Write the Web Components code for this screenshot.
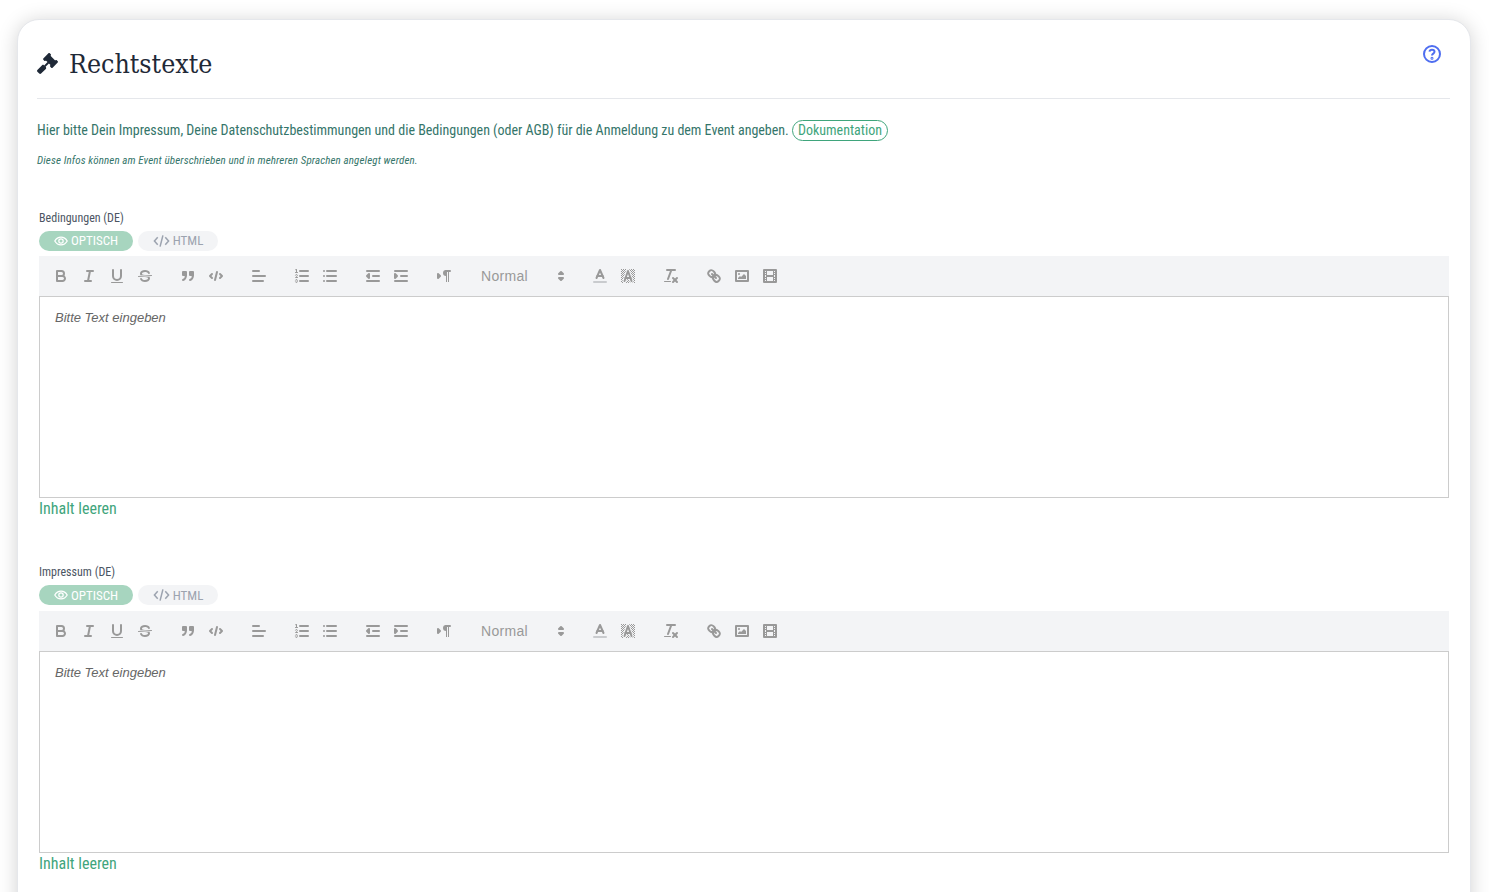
<!DOCTYPE html>
<html lang="de">
<head>
<meta charset="utf-8">
<title>Rechtstexte</title>
<style>
    html, body { margin: 0; height: 100%; overflow: hidden; background: #fff; }
    body { font-family: Roboto, "Liberation Sans", sans-serif; }
</style>
</head>
<body>
<legal-page>
    <span slot="title">Rechtstexte</span>
    <legal-editor label="Bedingungen (DE)"></legal-editor>
    <legal-editor label="Impressum (DE)"></legal-editor>
</legal-page>

<script>
// stroke helpers for the toolbar icons, all on an 18x18 grid
const ln = (a, b, c, d, w) => `<line x1="${a}" y1="${c}" x2="${b}" y2="${d}"${w ? ` stroke-width="${w}"` : ""}/>`;
const TOOLBAR_ICONS = {
    bold: `<path d="M5,4H9.5A2.5,2.5,0,0,1,12,6.5v0A2.5,2.5,0,0,1,9.5,9H5V4Z"/><path d="M5,9h5.5A2.5,2.5,0,0,1,13,11.5v0A2.5,2.5,0,0,1,10.5,14H5V9Z"/>`,
    italic: ln(7, 13, 4, 4) + ln(5, 11, 14, 14) + ln(8, 10, 14, 4),
    underline: `<path d="M5,3V9a4.012,4.012,0,0,0,4,4H9a4.012,4.012,0,0,0,4-4V3"/><rect class="f" height="1" rx=".5" ry=".5" width="12" x="3" y="15"/>`,
    strike: ln(15.5, 2.5, 8.5, 9.5, 1) + `<path class="f" d="M9.007,8C6.542,7.791,6,7.519,6,6.5,6,5.792,7.283,5,9,5c1.571,0,2.765.679,2.969,1.309a1,1,0,0,0,1.9-.617C13.356,4.106,11.354,3,9,3,6.2,3,4,4.538,4,6.5a3.2,3.2,0,0,0,.5,1.843Z"/><path class="f" d="M8.984,10C11.457,10.208,12,10.479,12,11.5c0,.708-1.283,1.5-3,1.5-1.571,0-2.765-.679-2.969-1.309a1,1,0,1,0-1.9.617C4.644,13.894,6.646,15,9,15c2.8,0,5-1.538,5-3.5a3.2,3.2,0,0,0-.5-1.843Z"/>`,
    quote: `<rect class="fs" height="3" width="3" x="4" y="5"/><rect class="fs" height="3" width="3" x="11" y="5"/><path d="M7,8c0,4.031-3,5-3,5"/><path d="M14,8c0,4.031-3,5-3,5"/>`,
    code: `<polyline points="5 7 3 9 5 11"/><polyline points="13 7 15 9 13 11"/>` + ln(10, 8, 5, 13),
    align: ln(3, 15, 9, 9) + ln(3, 13, 14, 14) + ln(3, 9, 4, 4),
    ordered: ln(7, 15, 4, 4) + ln(7, 15, 9, 9) + ln(7, 15, 14, 14) + ln(2.5, 4.5, 5.5, 5.5, 1)
        + `<path class="f" d="M3.5,6A0.5,0.5,0,0,1,3,5.5V3.085l-0.276.138A0.5,0.5,0,0,1,2.053,3c-0.124-.247-0.023-0.324.224-0.447l1-.5A0.5,0.5,0,0,1,4,2.5v3A0.5,0.5,0,0,1,3.5,6Z"/><path stroke-width="1" d="M4.5,10.5h-2c0-.234,1.85-1.076,1.85-2.234A0.959,0.959,0,0,0,2.5,8.156"/><path stroke-width="1" d="M2.5,14.846a0.959,0.959,0,0,0,1.85-.109A0.7,0.7,0,0,0,3.75,14a0.688,0.688,0,0,0,.6-0.736,0.959,0.959,0,0,0-1.85-.109"/>`,
    bullet: ln(6, 15, 4, 4) + ln(6, 15, 9, 9) + ln(6, 15, 14, 14) + ln(3, 3, 4, 4) + ln(3, 3, 9, 9) + ln(3, 3, 14, 14),
    outdent: ln(3, 15, 14, 14) + ln(3, 15, 4, 4) + ln(9, 15, 9, 9) + `<polygon class="fs" points="5 7 5 11 3 9 5 7"/>`,
    indent: ln(3, 15, 14, 14) + ln(3, 15, 4, 4) + ln(9, 15, 9, 9) + `<polygon class="fs" points="3 7 3 11 5 9 3 7"/>`,
    direction: `<polygon class="fs" points="3 11 5 9 3 7 3 11"/>` + ln(15, 11, 4, 4) + `<path class="f" d="M11,3a3,3,0,0,0,0,6h1V3H11Z"/><rect class="f" height="11" width="1" x="11" y="4"/><rect class="f" height="11" width="1" x="13" y="4"/>`,
    color: ln(3, 15, 15, 15) .replace("<line", `<line class="light"`) + `<polyline points="5.5 11 9 3 12.5 11"/>` + ln(11.63, 6.38, 9, 9),
    background: `<defs><pattern id="dots" width="2" height="2" patternUnits="userSpaceOnUse"><rect class="f" width="1" height="1"/><rect class="f" x="1" y="1" width="1" height="1"/></pattern></defs><rect x="2" y="2" width="14" height="14" fill="url(#dots)" stroke="none"/><polyline points="5.5 14 9 4 12.5 14" stroke="#f3f4f6" stroke-width="4"/><polyline points="5.5 14 9 4 12.5 14"/>` + ln(11.63, 6.38, 11, 11),
    clean: ln(5, 13, 3, 3) + ln(6, 9.35, 12, 3) + ln(11, 15, 11, 15) + ln(15, 11, 11, 15) + `<rect class="f" height="1" rx=".5" ry=".5" width="7" x="2" y="14"/>`,
    link: ln(7, 11, 7, 11) + `<path d="M8.9,4.577a3.476,3.476,0,0,1,.36,4.679A3.476,3.476,0,0,1,4.577,8.9C3.185,7.5,2.035,6.4,4.217,4.217S7.5,3.185,8.9,4.577Z"/><path d="M13.423,9.1a3.476,3.476,0,0,0-4.679-.36,3.476,3.476,0,0,0,.36,4.679c1.392,1.392,2.5,2.542,4.679.36S14.815,10.5,13.423,9.1Z"/>`,
    image: `<rect height="10" width="12" x="3" y="4"/><circle class="f" cx="6" cy="7" r="1"/><polyline class="f" stroke="none" points="5 12 5 11 7 9 8 10 11 7 13 9 13 12 5 12"/>`,
    video: `<rect height="12" width="12" x="3" y="3"/><rect class="f" height="12" width="1" x="5" y="3"/><rect class="f" height="12" width="1" x="12" y="3"/><rect class="f" height="2" width="8" x="5" y="8"/><rect class="f" height="1" width="3" x="3" y="5"/><rect class="f" height="1" width="3" x="3" y="7"/><rect class="f" height="1" width="3" x="3" y="10"/><rect class="f" height="1" width="3" x="3" y="12"/><rect class="f" height="1" width="3" x="12" y="5"/><rect class="f" height="1" width="3" x="12" y="7"/><rect class="f" height="1" width="3" x="12" y="10"/><rect class="f" height="1" width="3" x="12" y="12"/>`,
    arrows: `<polygon class="fs" points="7 11 9 13 11 11 7 11"/><polygon class="fs" points="7 7 9 5 11 7 7 7"/>`
};

class ToolButton extends HTMLElement {
    constructor() {
        super();
        this._root = this.attachShadow({mode: "open"});
    }
    connectedCallback() {
        this._root.innerHTML = `
            <style>
                :host { display: block; width: 28px; height: 24px; padding: 3px 5px; box-sizing: border-box; }
                svg { display: block; width: 18px; height: 18px; fill: none; stroke: var(--tool-color); stroke-width: 2; stroke-linecap: round; stroke-linejoin: round; }
                svg .f { fill: var(--tool-color); stroke: none; }
                svg .fs { fill: var(--tool-color); }
                svg .light { stroke: #c9cbce; }
            </style>
            <svg viewBox="0 0 18 18">${TOOLBAR_ICONS[this.getAttribute("icon")]}</svg>
        `;
    }
}
window.customElements.define("tool-button", ToolButton);

class EditorToolbar extends HTMLElement {
    constructor() {
        super();
        this._root = this.attachShadow({mode: "open"});
        const groups = [["bold", "italic", "underline", "strike"], ["quote", "code"], ["align"], ["ordered", "bullet"], ["outdent", "indent"], ["direction"], "picker", ["color", "background"], ["clean"], ["link", "image", "video"]];
        const markup = groups.map((group) => {
            if(group == "picker") {
                return `<div class="picker"><span>Normal</span><tool-button icon="arrows"></tool-button></div>`;
            }
            return `<div class="group">${group.map((name) => `<tool-button icon="${name}"></tool-button>`).join("")}</div>`;
        }).join("");
        this._root.innerHTML = `
            <style>
                :host { display: flex; gap: 15px; height: 40px; padding: 8px; box-sizing: border-box; background: #f3f4f6; --tool-color: #999; }
                .group { display: flex; }
                .picker { width: 98px; height: 24px; display: flex; align-items: center; justify-content: space-between; padding-left: 8px; box-sizing: border-box; font: 14px/24px "Liberation Sans", Arial, sans-serif; letter-spacing: .3px; color: #999; }
                .picker tool-button { margin-right: 1px; padding: 3px 0; width: 18px; }
            </style>
            ${markup}
        `;
    }
}
window.customElements.define("editor-toolbar", EditorToolbar);

class LegalEditor extends HTMLElement {
    constructor() {
        super();
        this._root = this.attachShadow({mode: "open"});
    }
    connectedCallback() {
        this._root.innerHTML = `
            <style>
                :host { display: block; margin-bottom: 47.5px; font-stretch: condensed; }
                label { display: block; font-size: 12px; line-height: 14px; color: #4b5563; margin-bottom: 6px; }
                .tabs { display: flex; gap: 5px; margin-bottom: 5.25px; }
                .tab { display: flex; align-items: center; justify-content: center; gap: 3px; height: 20px; border-radius: 10px; font-size: 13px; }
                .tab svg { height: 14px; fill: none; stroke: currentColor; stroke-width: 1.6; }
                .visual svg { width: 14px; }
                .html svg { width: 17px; }
                .visual { width: 94px; background: #a7d5bf; color: #fff; }
                .html { width: 80px; background: #f3f4f6; color: #9ca3af; }
                .area { height: 202px; box-sizing: border-box; border: 1px solid #ccc; padding: 11px 15px; font: italic 13px/19.5px "Liberation Sans", Arial, sans-serif; color: #666; }
                .clear { display: block; margin-top: 2px; font-size: 16px; line-height: 18px; color: #3fa57c; text-decoration: none; }
            </style>
            <label>${this.getAttribute("label")}</label>
            <div class="tabs">
                <div class="tab visual">
                    <svg viewBox="0 0 18 14"><path d="M1 7C3 3.500 5.800 2 9 2s6 1.500 8 5c-2 3.500-4.800 5-8 5S3 10.500 1 7Z"/><circle cx="9" cy="7" r="2.800"/></svg>
                    <span>OPTISCH</span>
                </div>
                <div class="tab html">
                    <svg viewBox="0 0 18 14"><path d="M5 3 1.500 7 5 11M13 3l3.500 4L13 11M10.500 1 7.500 13"/></svg>
                    <span>HTML</span>
                </div>
            </div>
            <editor-toolbar></editor-toolbar>
            <div class="area">Bitte Text eingeben</div>
            <a class="clear" href="#">Inhalt leeren</a>
        `;
    }
}
window.customElements.define("legal-editor", LegalEditor);

class LegalPage extends HTMLElement {
    constructor() {
        super();
        this._root = this.attachShadow({mode: "open"});
        this._root.innerHTML = `
            <style>
                :host { display: block; box-sizing: border-box; margin: 19px 18px 0 17px; min-height: 1000px; padding: 0 20px 0 19px; background: #fff; border-radius: 22px; border: 1px solid #e5e7eb; box-shadow: 0 2px 20px rgba(0, 0, 0, .18); }
                header { position: relative; display: flex; align-items: center; gap: 11px; height: 79px; padding-top: 8px; box-sizing: border-box; border-bottom: 1px solid #e5e7eb; }
                h1 { margin: 0; padding-top: 1px; font: 400 26.500px/36px "DejaVu Serif", serif; font-stretch: condensed; color: #1f2937; }
                .gavel { width: 21px; height: 21px; fill: #1f2937; }
                .help { position: absolute; top: 24px; right: 8px; width: 20px; height: 20px; fill: none; stroke: #4f6ef0; stroke-width: 2; }
                .intro { margin: 21px 0 0; font-size: 14px; line-height: 18px; letter-spacing: -.008px; color: #35756a; font-stretch: condensed; }
                .doc { display: inline-block; padding: 0 5px; border: 1px solid #3fa57c; border-radius: 11px; color: #3fa57c; line-height: 19px; letter-spacing: 0; }
                .note { margin: 13px 0 0; font-size: 11px; line-height: 14px; font-style: italic; letter-spacing: .12px; color: #35756a; font-stretch: condensed; }
                .fields { padding: 42.550px 1px 0 2px; }
            </style>
            <header>
                <svg class="gavel" viewBox="0 0 512 512"><path d="M504.971 199.362l-22.627-22.627c-9.373-9.373-24.569-9.373-33.941 0l-5.657 5.657L329.608 69.255l5.657-5.657c9.373-9.373 9.373-24.569 0-33.941L312.638 7.029c-9.373-9.373-24.569-9.373-33.941 0L154.246 131.48c-9.373 9.373-9.373 24.569 0 33.941l22.627 22.627c9.373 9.373 24.569 9.373 33.941 0l5.657-5.657 39.598 39.598-81.04 81.04-5.657-5.657c-12.497-12.497-32.758-12.497-45.255 0L9.373 412.118c-12.497 12.497-12.497 32.758 0 45.255l45.255 45.255c12.497 12.497 32.758 12.497 45.255 0l114.745-114.745c12.497-12.497 12.497-32.758 0-45.255l-5.657-5.657 81.04-81.04 39.598 39.598-5.657 5.657c-9.373 9.373-9.373 24.569 0 33.941l22.627 22.627c9.373 9.373 24.569 9.373 33.941 0l124.451-124.451c9.372-9.372 9.372-24.568 0-33.941z"/></svg>
                <h1><slot name="title"></slot></h1>
                <svg class="help" viewBox="0 0 20 20"><circle cx="10" cy="10" r="8"/><path d="M7.500 7.700C7.700 6.300 8.800 5.700 10 5.700c1.500 0 2.500.9 2.500 2.100 0 1.800-2.500 1.900-2.500 3.700"/><circle cx="10" cy="14.300" r=".5"/></svg>
            </header>
            <p class="intro">Hier bitte Dein Impressum, Deine Datenschutzbestimmungen und die Bedingungen (oder AGB) für die Anmeldung zu dem Event angeben. <span class="doc">Dokumentation</span></p>
            <p class="note">Diese Infos können am Event überschrieben und in mehreren Sprachen angelegt werden.</p>
            <div class="fields"><slot></slot></div>
        `;
    }
}
window.customElements.define("legal-page", LegalPage);
</script>
</body>
</html>
